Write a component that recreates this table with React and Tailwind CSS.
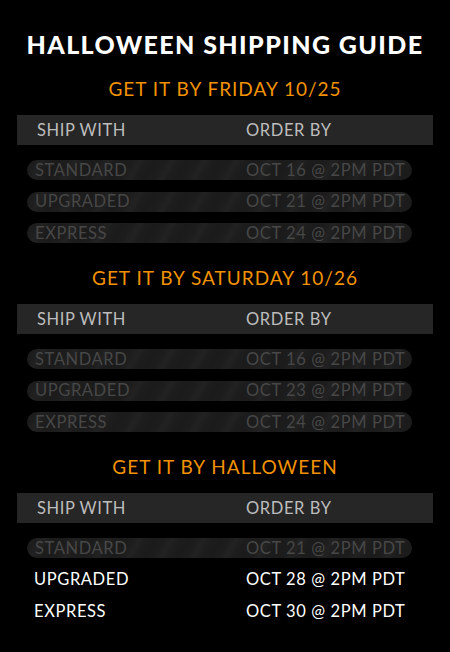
const sections = [
  {
    title: "GET IT BY FRIDAY 10/25",
    rows: [
      ["STANDARD", "OCT 16 @ 2PM PDT", true],
      ["UPGRADED", "OCT 21 @ 2PM PDT", true],
      ["EXPRESS", "OCT 24 @ 2PM PDT", true],
    ],
  },
  {
    title: "GET IT BY SATURDAY 10/26",
    rows: [
      ["STANDARD", "OCT 16 @ 2PM PDT", true],
      ["UPGRADED", "OCT 23 @ 2PM PDT", true],
      ["EXPRESS", "OCT 24 @ 2PM PDT", true],
    ],
  },
  {
    title: "GET IT BY HALLOWEEN",
    rows: [
      ["STANDARD", "OCT 21 @ 2PM PDT", true],
      ["UPGRADED", "OCT 28 @ 2PM PDT", false],
      ["EXPRESS", "OCT 30 @ 2PM PDT", false],
    ],
  },
];

function Row({ method, date, expired }) {
  if (expired) {
    return (
      <div className="shrink-0 ml-[27px] w-[385px] h-[20px] rounded-full flex items-center pl-[8px] bg-[repeating-linear-gradient(120deg,#1b1b1b_0px,#1d1d1d_8px,#222222_14px,#1d1d1d_20px,#1b1b1b_28px)] text-[#474747]">
        <span className="w-[211px]">{method}</span>
        <span>{date}</span>
      </div>
    );
  }
  return (
    <div className="shrink-0 ml-[27px] w-[385px] h-[20px] flex items-center pl-[7px] text-white">
      <span className="w-[212px]">{method}</span>
      <span>{date}</span>
    </div>
  );
}

export default function App() {
  return (
    <div
      className="w-[450px] h-[652px] bg-black flex flex-col text-[16.5px] tracking-[0.6px] leading-none"
      style={{ fontFamily: "Lato, 'Noto Sans', sans-serif" }}
    >
      <div className="shrink-0 h-[70px] pt-[18px] flex items-center justify-center text-white font-black text-[25px] tracking-[1.4px]">
        HALLOWEEN SHIPPING GUIDE
      </div>
      {sections.map((s, i) => (
        <div key={i} className="shrink-0 flex flex-col">
          <div className="h-[36px] flex items-center justify-center text-[#f39200] text-[19px] tracking-[1px]">
            {s.title}
          </div>
          <div className="mt-[9px] mx-[17px] h-[30px] bg-[#262626] flex items-center pl-[20px] text-[#bdbdbd]">
            <span className="w-[209px]">SHIP WITH</span>
            <span>ORDER BY</span>
          </div>
          <div className="pt-[15px] flex flex-col gap-[11.5px]">
            {s.rows.map((r, j) => (
              <Row key={j} method={r[0]} date={r[1]} expired={r[2]} />
            ))}
          </div>
          <div className="h-[16px]" />
        </div>
      ))}
    </div>
  );
}
